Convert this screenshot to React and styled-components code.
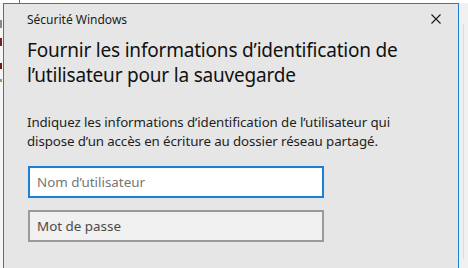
import React from "react";
import styled, { createGlobalStyle } from "styled-components";

const GlobalStyle = createGlobalStyle`
  html, body { margin: 0; padding: 0; background: #ffffff; }
  * { box-sizing: border-box; }
`;

const Screen = styled.div`
  width: 468px;
  height: 268px;
  overflow: hidden;
  display: flex;
  flex-direction: column;
  background: #f3f3f3;
  font-family: "Noto Sans", "Open Sans", sans-serif;
`;

const TopStrip = styled.div`
  height: 3px;
  flex: none;
  display: flex;
  background: #ffffff;
`;

const BehindEdge = styled.div`
  width: 1px;
  margin-left: 19px;
  background: #1a7fd6;
`;

const Row = styled.div`
  flex: 1;
  display: flex;
  min-height: 0;
`;

const LeftGutter = styled.div`
  width: 3px;
  flex: none;
  display: flex;
  flex-direction: column;
  background: #f6f6f6;
`;

const Mark = styled.div`
  width: 2px;
  height: ${(p) => p.$h}px;
  margin-top: ${(p) => p.$top}px;
  background: ${(p) => p.$color};
`;

const Dialog = styled.div`
  width: 456px;
  flex: none;
  background: #e6e6e6;
  border: 1px solid #1a7fd6;
  border-bottom: none;
  display: flex;
  flex-direction: column;
`;

const RightStrip = styled.div`
  flex: 1;
  display: flex;
  background: #f0f0f0;
`;

const RightLine = styled.div`
  width: 1px;
  margin-left: 4px;
  margin-top: 21px;
  height: 235px;
  background: #dcdcdc;
`;

const TitleBar = styled.div`
  height: 30px;
  display: flex;
  align-items: center;
  padding-left: 23px;
`;

const WindowName = styled.span`
  flex: 1;
  font-size: 12px;
  color: #1b1b1b;
`;

const CloseButton = styled.div`
  width: 44px;
  height: 30px;
  display: flex;
  align-items: center;
  justify-content: center;
`;

const Body = styled.div`
  padding: 0 23px;
  display: flex;
  flex-direction: column;
`;

const Heading = styled.h1`
  margin: 4px 0 0;
  font-weight: 400;
  font-size: 19px;
  line-height: 25px;
  color: #111111;
  letter-spacing: -0.2px;
`;

const Description = styled.p`
  margin: 25px 0 0;
  max-width: 380px;
  font-size: 13.3px;
  line-height: 19px;
  color: #1e1e1e;
  letter-spacing: -0.1px;
`;

const Field = styled.input`
  width: 296px;
  height: 32px;
  margin: ${(p) => p.$mt}px 0 0 1px;
  padding: 0 7px;
  border: 2px solid ${(p) => p.$border};
  background: ${(p) => p.$bg};
  font-family: inherit;
  font-size: 13.4px;
  outline: none;
  &::placeholder {
    color: ${(p) => p.$ph};
    opacity: 1;
  }
`;

export default function App() {
  return (
    <Screen>
      <GlobalStyle />
      <TopStrip>
        <BehindEdge />
      </TopStrip>
      <Row>
        <LeftGutter>
          <Mark $top={17} $h={8} $color="#8a8a8a" />
          <Mark $top={10} $h={8} $color="#7d1c1c" />
          <Mark $top={17} $h={6} $color="#6e1b1b" />
          <Mark $top={10} $h={3} $color="#b09060" />
        </LeftGutter>
        <Dialog>
          <TitleBar>
            <WindowName>Sécurité Windows</WindowName>
            <CloseButton>
              <svg width="10" height="10" viewBox="0 0 10 10">
                <path d="M0.5 0.5 L9.5 9.5 M9.5 0.5 L0.5 9.5" stroke="#1a1a1a" strokeWidth="1.1" fill="none" />
              </svg>
            </CloseButton>
          </TitleBar>
          <Body>
            <Heading>
              Fournir les informations d’identification de l’utilisateur pour la sauvegarde
            </Heading>
            <Description>
              Indiquez les informations d’identification de l’utilisateur qui dispose d’un accès en écriture au dossier réseau partagé.
            </Description>
            <Field
              $mt={15}
              $border="#1a7fd6"
              $bg="#ffffff"
              $ph="#767676"
              placeholder="Nom d’utilisateur"
            />
            <Field
              $mt={12}
              $border="#9a9a9a"
              $bg="#f0f0f0"
              $ph="#4a4a4a"
              type="password"
              placeholder="Mot de passe"
            />
          </Body>
        </Dialog>
        <RightStrip>
          <RightLine />
        </RightStrip>
      </Row>
    </Screen>
  );
}
